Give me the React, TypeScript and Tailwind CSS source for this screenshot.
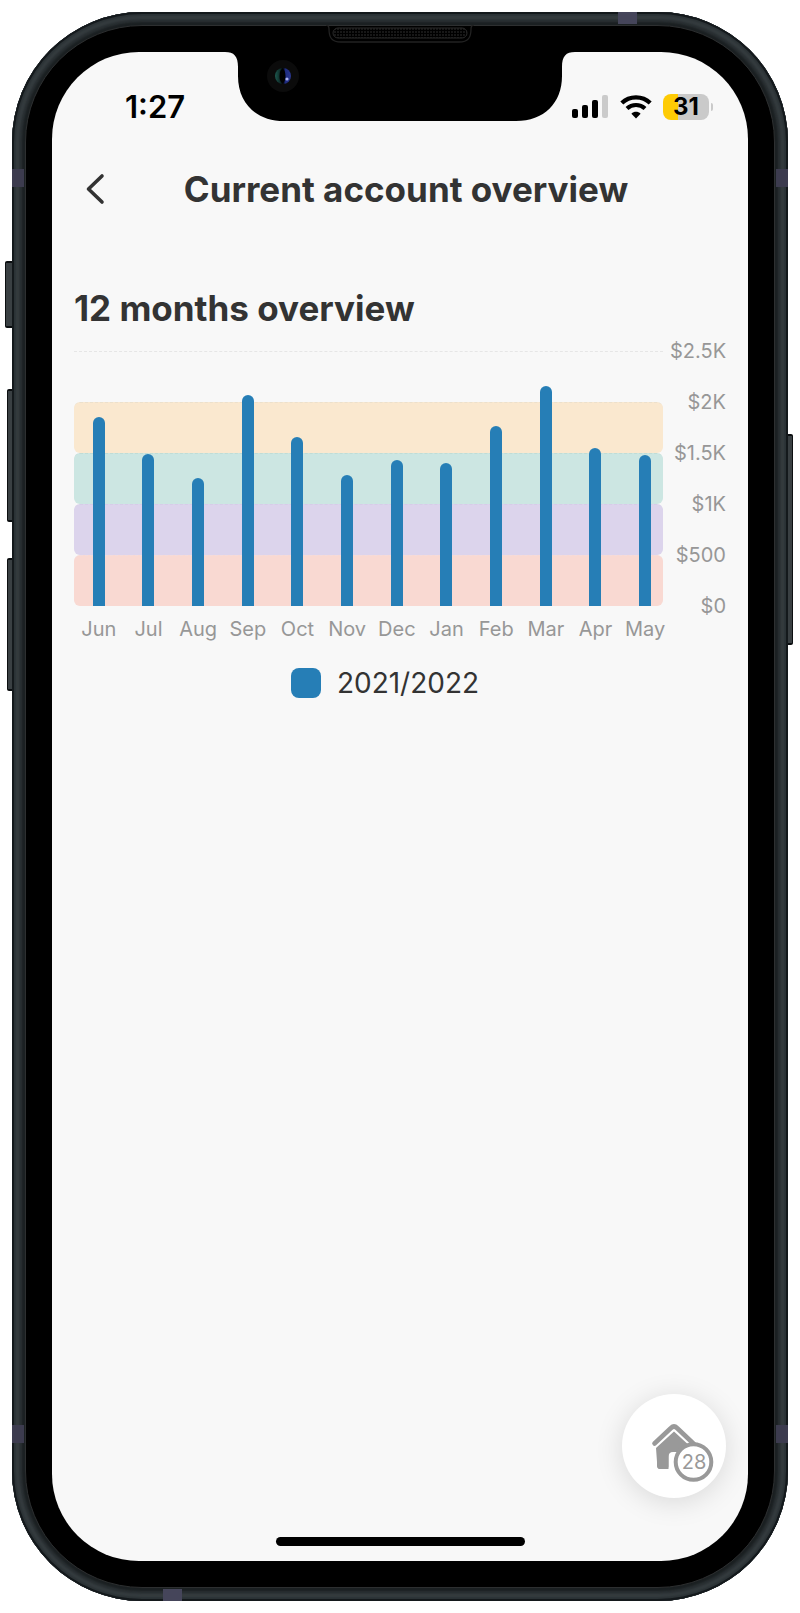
const months = [
  { label: "Jun", value: 1853 },
  { label: "Jul", value: 1490 },
  { label: "Aug", value: 1255 },
  { label: "Sep", value: 2069 },
  { label: "Oct", value: 1657 },
  { label: "Nov", value: 1284 },
  { label: "Dec", value: 1431 },
  { label: "Jan", value: 1402 },
  { label: "Feb", value: 1765 },
  { label: "Mar", value: 2157 },
  { label: "Apr", value: 1549 },
  { label: "May", value: 1480 },
];

const maxValue = 2500;
const ticks = ["$2.5K", "$2K", "$1.5K", "$1K", "$500", "$0"];

function SignalIcon() {
  return (
    <svg width="37" height="24" viewBox="0 0 37 24" aria-hidden="true">
      <rect x="0" y="14" width="6" height="9" rx="2" />
      <rect x="10" y="10" width="6" height="13" rx="2" />
      <rect x="20" y="5" width="6" height="18" rx="2" />
      <rect x="30" y="0" width="6" height="23" rx="2" fill="#cbcbcb" />
    </svg>
  );
}

function WifiIcon() {
  return (
    <svg width="32" height="24" viewBox="0 0 32 24" fill="none" aria-hidden="true">
      <path d="M1.8 8.1C9.5 0.4 22.5 0.4 30.2 8.1" stroke="#000" strokeWidth="4.2" />
      <path d="M7 13.6C12 8.8 20 8.8 25 13.6" stroke="#000" strokeWidth="4.1" />
      <path d="M16 23.5L11.4 18.7C14 16.2 18 16.2 20.6 18.7Z" fill="#000" />
    </svg>
  );
}

function Battery() {
  return (
    <div className="flex items-center gap-[2px]">
      <div className="flex h-[26px] w-[46px] items-center justify-center rounded-[8px] bg-[linear-gradient(to_right,#fecb05_15px,#cacaca_15px)] text-[24px] leading-[26px] font-bold">
        31
      </div>
      <div className="h-2 w-[2px] rounded-r-full bg-[#cacaca]" />
    </div>
  );
}

function StatusBar() {
  return (
    <div className="flex h-[110px] items-center justify-between pr-[35px] pl-[73px] text-black">
      <time className="text-[31px] leading-9 font-semibold">1:27</time>
      <div className="flex items-center gap-[11px]">
        <SignalIcon />
        <WifiIcon />
        <Battery />
      </div>
    </div>
  );
}

function Header() {
  return (
    <header className="flex h-[54px] items-center pl-[22px]">
      <button type="button" aria-label="Back" className="flex size-[42px] items-center justify-center">
        <svg width="20" height="32" viewBox="0 0 20 32" fill="none" stroke="#333" strokeWidth="3.6" strokeLinecap="round" strokeLinejoin="round">
          <path d="M17 3L3.5 16L17 29" />
        </svg>
      </button>
      <h1 className="flex-1 pr-[52px] text-center text-[35px] leading-10 font-[750] whitespace-nowrap">
        Current account overview
      </h1>
    </header>
  );
}

function Chart() {
  return (
    <figure className="mt-[23px]">
      <div className="flex">
        <div className="min-w-0 flex-1">
          <div className="relative h-[255px]">
            <div className="absolute inset-0 right-[7px] grid grid-rows-5">
              <div className="border-t border-dashed border-[#e6e6e6]" />
              <div className="rounded-[6px] border-t border-dashed border-[#ece0cc] bg-[#fae8cf]" />
              <div className="rounded-[6px] border-t border-dashed border-[#bfdcd6] bg-[#cce6e2]" />
              <div className="rounded-[6px] border-t border-dashed border-[#d6cce8] bg-[#dcd4ec]" />
              <div className="rounded-[6px] border-t border-dashed border-[#f3dcdc] bg-[#f9d9d2]" />
            </div>
            <div className="relative grid h-full grid-cols-12">
              {months.map((m) => (
                <div key={m.label} className="flex items-end justify-center">
                  <div
                    className="w-3 rounded-t-full bg-[#267eb6]"
                    style={{ height: `${(m.value / maxValue) * 100}%` }}
                  />
                </div>
              ))}
            </div>
          </div>
          <div className="mt-[9px] grid grid-cols-12 text-[20px] leading-7 text-[#979797]">
            {months.map((m) => (
              <span key={m.label} className="text-center">
                {m.label}
              </span>
            ))}
          </div>
        </div>
        <div className="-mt-[14px] flex h-[283px] w-[56px] flex-col justify-between text-right text-[20px] leading-7 text-[#979797]">
          {ticks.map((t) => (
            <span key={t}>{t}</span>
          ))}
        </div>
      </div>
      <figcaption className="mt-[20px] flex items-center justify-center gap-4 pr-[30px] text-[28px] leading-10">
        <span className="size-[30px] rounded-[8px] bg-[#267eb6]" />
        2021/2022
      </figcaption>
    </figure>
  );
}

function HomeButton() {
  return (
    <button
      type="button"
      aria-label="Home, 28"
      className="relative size-[104px] rounded-full bg-white shadow-[0_4px_28px_rgba(0,0,0,0.13)]"
    >
      <svg width="104" height="104" viewBox="0 0 104 104" fill="none" aria-hidden="true">
        <path d="M32.5 49.5L49 34Q52 31 55 34L74 52" stroke="#999" strokeWidth="4.6" strokeLinecap="round" />
        <path d="M34 54L52 37.5L70 54V75H46H38Q35.500 75 35.300 72Z" fill="#999" />
        <path d="M46.500 76V63Q46.500 58 51 58H60L71 76Z" fill="#fff" />
        <path d="M35 60V72Q35.300 75 38 75H43.500Q46.500 75 46.500 72V60Z" fill="#999" />
        <circle cx="71.500" cy="68" r="17.800" fill="#fff" stroke="#999" strokeWidth="4" />
      </svg>
      <span className="absolute top-[56px] left-[52px] w-[40px] text-center text-[20px] leading-6 text-[#999]">28</span>
    </button>
  );
}

function Notch() {
  return (
    <svg className="absolute top-[13px] left-1/2 -translate-x-1/2" width="360" height="97" viewBox="0 0 360 97" aria-hidden="true">
      <defs>
        <pattern id="mesh" width="3" height="3" patternUnits="userSpaceOnUse">
          <circle cx="1" cy="1" r="0.8" fill="#333" />
        </pattern>
        <linearGradient id="lens">
          <stop offset="0" stopColor="#1d5a50" />
          <stop offset="0.35" stopColor="#0d2624" />
          <stop offset="0.5" stopColor="#000" />
          <stop offset="0.65" stopColor="#1f2c80" />
          <stop offset="1" stopColor="#2a3790" />
        </linearGradient>
      </defs>
      <path d="M0 26V27H5C14 27 18 31 18 42V51C18 78 36 96 64 96H296C324 96 342 78 342 51V42C342 31 346 27 355 27H360V26Z" fill="#000" />
      <path d="M106 0Q109 0 109 4C109 13 112 17 121 17H239C248 17 251 13 251 4Q251 0 254 0" fill="none" stroke="#222" strokeWidth="1.300" />
      <rect x="113" y="3" width="134" height="10" rx="5" fill="url(#mesh)" stroke="#2a2a2a" strokeWidth="1" />
      <circle cx="63" cy="51" r="16" fill="#0b0b0b" />
      <circle cx="63" cy="51" r="8" fill="url(#lens)" />
      <ellipse cx="62.500" cy="51" rx="3" ry="7" fill="#000" />
      <circle cx="67" cy="54" r="1.600" fill="#a9b0f0" />
    </svg>
  );
}

function SideButton({ className }: { className: string }) {
  return <div className={`absolute border-y-2 border-[#0c0f11] ${className}`} />;
}

export default function App() {
  return (
    <div className="flex min-h-screen bg-white p-3 font-['Inter',sans-serif] text-[#333]">
      <div className="relative flex flex-1">
        <SideButton className="top-[249px] -left-[7px] h-[67px] w-[8px] rounded-l-[2px] border-l bg-[#3a4043]" />
        <SideButton className="top-[377px] -left-[5px] h-[133px] w-[6px] rounded-l-[2px] border-l bg-[#3a4043]" />
        <SideButton className="top-[546px] -left-[5px] h-[133px] w-[6px] rounded-l-[2px] border-l bg-[#3a4043]" />
        <SideButton className="top-[422px] -right-[5px] h-[211px] w-[6px] rounded-r-[2px] border-r bg-[#3a4043]" />

        <div className="relative flex flex-1 overflow-hidden rounded-[130px] bg-[#1b2022] p-[13px] shadow-[inset_0_0_0_2px_#14191c,inset_0_0_2px_4px_#2b3235,inset_0_0_2px_7px_#363d40,inset_0_0_2px_10px_#2a3033]">
          <div className="absolute top-0 right-[151px] h-3 w-[19px] bg-[#45455a]" />
          <div className="absolute top-[157px] left-0 h-[18px] w-3 bg-[#3c3b4e]" />
          <div className="absolute top-[157px] right-0 h-[18px] w-3 bg-[#3c3b4e]" />
          <div className="absolute bottom-[158px] left-0 h-[18px] w-3 bg-[#3c3b4e]" />
          <div className="absolute right-0 bottom-[158px] h-[18px] w-3 bg-[#3c3b4e]" />
          <div className="absolute bottom-0 left-[151px] h-3 w-[19px] bg-[#45455a]" />

          <div className="relative flex flex-1 rounded-[117px] border border-[#2d2f30] bg-black p-[26px]">
            <div className="flex min-w-0 flex-1 flex-col rounded-[87px] bg-[#f8f8f8]">
              <StatusBar />
              <Header />
              <main className="px-[22px] pt-[72px]">
                <h2 className="text-[35px] leading-10 font-[750]">12 months overview</h2>
                <Chart />
              </main>
              <div className="mt-auto flex justify-end pr-[22px]">
                <HomeButton />
              </div>
              <div className="mx-auto mt-[39px] mb-[15px] h-[9px] w-[249px] rounded-full bg-black" />
            </div>
          </div>
          <Notch />
        </div>
      </div>
    </div>
  );
}
